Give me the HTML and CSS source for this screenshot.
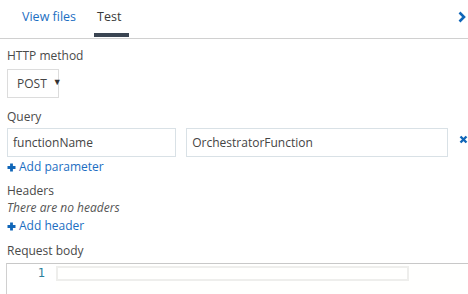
FILE: index.html
```html
<!DOCTYPE html>
<html>
<head>
<meta charset="utf-8">
<link rel="stylesheet" href="styles.css">
</head>
<body>
<div class="tabbar">
  <div class="tab tab-link">View files</div>
  <div class="tab tab-active">Test</div>
  <div class="tab-spacer"></div>
  <svg class="chevron" width="8" height="12" viewBox="0 0 8 12"><path d="M1.5 1.5 L6 6 L1.5 10.5" fill="none" stroke="#1066b8" stroke-width="2.6"/></svg>
</div>
<div class="content">
  <div class="label label-first">HTTP method</div>
  <div class="select"><span>POST</span><span class="arrow">▼</span></div>
  <div class="label label-query">Query</div>
  <div class="row">
    <div class="input input-name">functionName</div>
    <div class="input input-value">OrchestratorFunction</div>
    <svg class="remove" width="9" height="9" viewBox="0 0 9 9"><path d="M1.5 1.5 L7.5 7.5 M7.5 1.5 L1.5 7.5" stroke="#1066b8" stroke-width="2.4"/></svg>
  </div>
  <div class="add"><svg width="9" height="9" viewBox="0 0 9 9"><path d="M4.5 0.5 V8.5 M0.5 4.5 H8.5" stroke="#1066b8" stroke-width="2.8"/></svg>Add parameter</div>
  <div class="label label-headers">Headers</div>
  <div class="empty">There are no headers</div>
  <div class="add"><svg width="9" height="9" viewBox="0 0 9 9"><path d="M4.5 0.5 V8.5 M0.5 4.5 H8.5" stroke="#1066b8" stroke-width="2.8"/></svg>Add header</div>
  <div class="label label-body">Request body</div>
</div>
<div class="editor">
  <div class="gutter"><span class="lineno">1</span></div>
  <div class="code"><div class="current-line"></div></div>
</div>
</body>
</html>
```

FILE: styles.css
```css
html, body {
  margin: 0;
  padding: 0;
  background: #fff;
  font-family: "Open Sans", "Noto Sans", sans-serif;
  color: #444;
  overflow: hidden;
}
.tabbar {
  display: flex;
  align-items: flex-start;
  height: 38px;
  border-bottom: 1px solid #d0d0d0;
  box-sizing: content-box;
}
.tab {
  font-size: 12.5px;
  line-height: 17px;
  padding-top: 8px;
  height: 29px;
  box-sizing: border-box;
}
.tab-link {
  color: #1b6ec2;
  margin-left: 22px;
}
.tab-active {
  color: #3a3a3a;
  margin-left: 18px;
  padding-left: 3px;
  padding-right: 8px;
  height: 37px;
  border-bottom: 4px solid #3a4552;
}
.tab-spacer { flex: 1; }
.chevron {
  margin-top: 11px;
  margin-right: 2px;
}
.content {
  padding-left: 7px;
  display: flex;
  flex-direction: column;
  align-items: flex-start;
}
.label {
  font-size: 12px;
  line-height: 16px;
  color: #4a4a4a;
}
.label-first { margin-top: 9px; }
.select {
  margin-top: 5px;
  width: 52px;
  height: 29px;
  box-sizing: border-box;
  border: 1px solid #dcdcdc;
  display: flex;
  align-items: center;
  padding-left: 9px;
  font-size: 12px;
  color: #444;
}
.select .arrow {
  font-size: 9px;
  margin-left: 6px;
  margin-top: -4px;
  color: #333;
}
.label-query { margin-top: 11px; }
.row {
  margin-top: 3px;
  display: flex;
  align-items: center;
  width: 461px;
}
.input {
  height: 29px;
  box-sizing: border-box;
  border: 1px solid #d9e1e6;
  display: flex;
  align-items: center;
  padding-left: 5px;
  font-size: 12px;
  color: #444;
}
.input-name { width: 170px; }
.input-value { width: 263px; margin-left: 10px; }
.remove { margin-left: 11px; margin-top: -6px; }
.add {
  display: flex;
  align-items: center;
  font-size: 12px;
  line-height: 16px;
  color: #1b6ec2;
  margin-top: 2px;
}
.add svg { margin-right: 3px; }
.label-headers { margin-top: 8px; }
.empty {
  font-size: 12px;
  line-height: 16px;
  font-style: italic;
  color: #555;
  margin-top: 1px;
}
.label-body { margin-top: 9px; }
.editor {
  margin-top: 4px;
  margin-left: 6px;
  border-top: 1px solid #c8c8c8;
  border-left: 1px solid #d0d0d0;
  display: flex;
  height: 30px;
}
.gutter {
  width: 49px;
  background: #fff;
  text-align: right;
  box-sizing: border-box;
  padding-right: 11px;
}
.lineno {
  font-family: "DejaVu Sans Mono", monospace;
  font-size: 12px;
  line-height: 17px;
  color: #2b7f9c;
  display: block;
  padding-top: 1px;
}
.code {
  flex: 1;
  background: #fffffe;
  padding-top: 2px;
}
.current-line {
  width: 353px;
  height: 15px;
  box-sizing: border-box;
  border: 2px solid #eeeeec;
}
```
